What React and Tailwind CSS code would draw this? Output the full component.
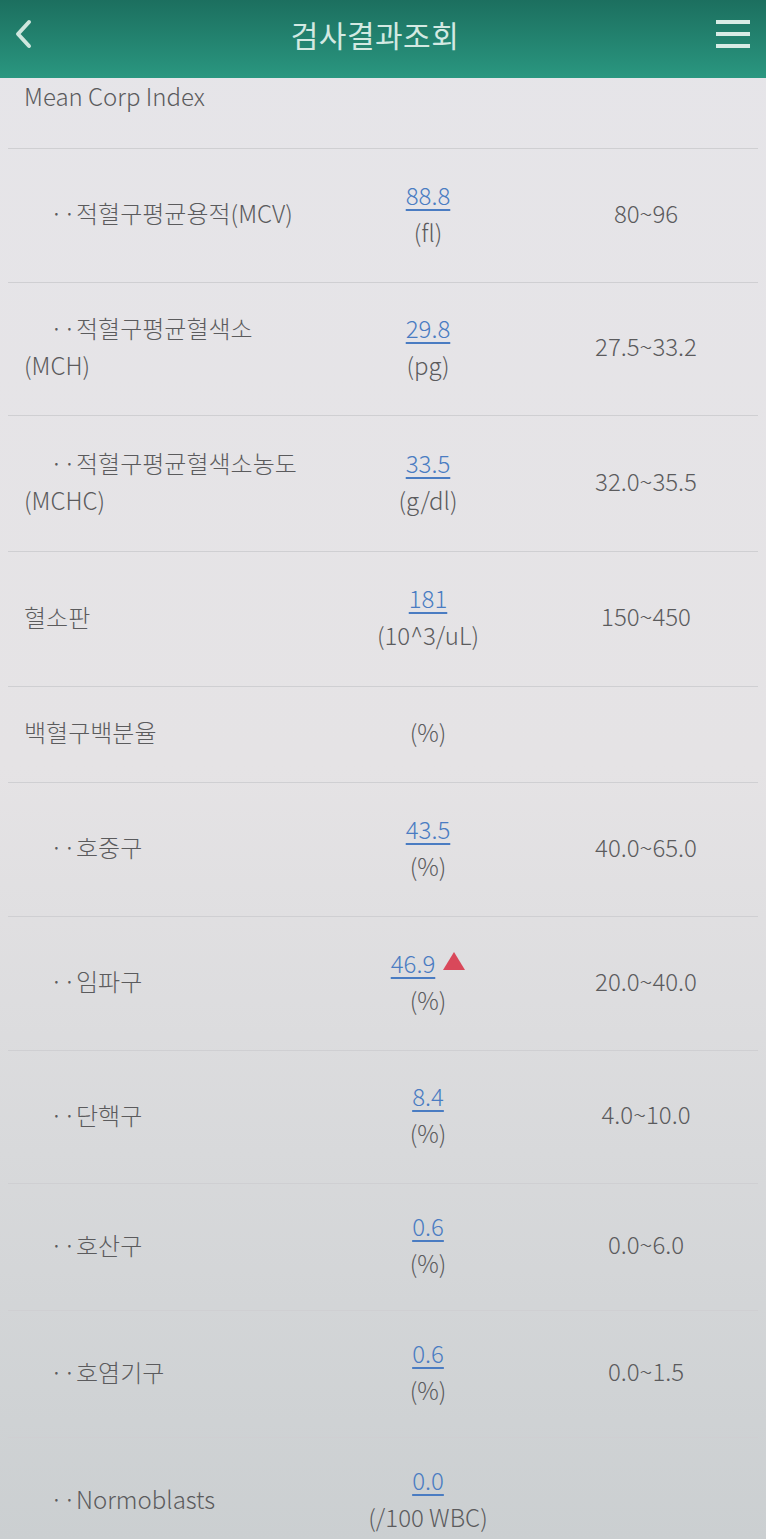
import React from 'react';

const rows = [
  { label: ['··적혈구평균용적(MCV)'], value: '88.8', unit: '(fl)', range: '80~96', h: 'h-[133px]' },
  { label: ['··적혈구평균혈색소', '(MCH)'], value: '29.8', unit: '(pg)', range: '27.5~33.2', h: 'h-[132px]' },
  { label: ['··적혈구평균혈색소농도', '(MCHC)'], value: '33.5', unit: '(g/dl)', range: '32.0~35.5', h: 'h-[135px]' },
  { label: ['혈소판'], value: '181', unit: '(10^3/uL)', range: '150~450', h: 'h-[134px]', top: true },
  { label: ['백혈구백분율'], unit: '(%)', range: '', h: 'h-[95px]', top: true },
  { label: ['··호중구'], value: '43.5', unit: '(%)', range: '40.0~65.0', h: 'h-[133px]' },
  { label: ['··임파구'], value: '46.9', unit: '(%)', range: '20.0~40.0', h: 'h-[133px]', high: true },
  { label: ['··단핵구'], value: '8.4', unit: '(%)', range: '4.0~10.0', h: 'h-[132px]' },
  { label: ['··호산구'], value: '0.6', unit: '(%)', range: '0.0~6.0', h: 'h-[126px]' },
  { label: ['··호염기구'], value: '0.6', unit: '(%)', range: '0.0~1.5', h: 'h-[126px]' },
  { label: ['··Normoblasts'], value: '0.0', unit: '(/100 WBC)', range: '', h: 'h-[126px]' },
];

const Row = ({ row }) => (
  <div className="border-t border-[#cfcfd2] mx-[8px]">
    <div className={`flex items-center -mx-[8px] pb-[6px] ${row.h}`}>
      <div className="w-[330px] pl-[24px] leading-[37px]">
        {row.label.map((line, i) => (
          <div key={i} className={i === 0 && !row.top ? 'pl-[26px]' : ''}>{line}</div>
        ))}
      </div>
      <div className="w-[196px] text-center leading-[37px]">
        {row.value && (
          <div className="flex items-center justify-center gap-[8px]">
            <span className="text-[#4a7cc2] underline underline-offset-[4px] decoration-[2px]">{row.value}</span>
            {row.high && (
              <svg width="22" height="18" viewBox="0 0 22 18" className="mb-[2px]">
                <polygon points="11,0 22,18 0,18" fill="#d9485a" />
              </svg>
            )}
          </div>
        )}
        <div>{row.unit}</div>
      </div>
      <div className="w-[240px] text-center">{row.range}</div>
    </div>
  </div>
);

export default function App() {
  return (
    <div
      className="w-[766px] h-[1539px] overflow-hidden bg-linear-to-b from-[#e6e5e9] via-[#e5e3e5] to-[#cbcfd1] text-[24px] font-light text-[#5b5b5d]"
      style={{ fontFamily: '"Noto Sans CJK KR", "Noto Sans", sans-serif' }}
    >
      <div className="h-[78px] bg-linear-to-b from-[#1c6f5f] to-[#2a9780] flex items-center justify-between px-[12px] pb-[10px]">
        <svg width="22" height="30" viewBox="0 0 22 30">
          <polyline points="17,3 6,15 17,27" fill="none" stroke="#cfe6de" strokeWidth="4" strokeLinecap="round" strokeLinejoin="round" />
        </svg>
        <div className="text-[30px] font-normal text-[#d3e9e2] tracking-[0.5px]">검사결과조회</div>
        <div className="flex flex-col gap-[8px] pr-[4px]">
          <div className="w-[34px] h-[4px] bg-[#d8ece6]" />
          <div className="w-[34px] h-[4px] bg-[#d8ece6]" />
          <div className="w-[34px] h-[4px] bg-[#d8ece6]" />
        </div>
      </div>
      <div className="h-[70px] pl-[24px]">Mean Corp Index</div>
      {rows.map((row, i) => (
        <Row key={i} row={row} />
      ))}
    </div>
  );
}
